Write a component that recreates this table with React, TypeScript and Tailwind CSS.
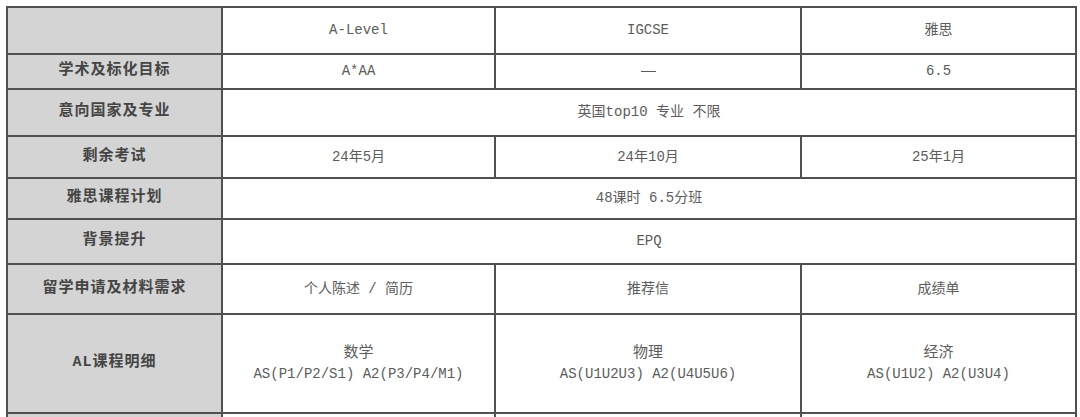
import React from "react";

const font = {
  fontFamily: '"Liberation Mono", "Noto Sans CJK SC", monospace',
};

type Row = { label: string; h: string; cells: (string | string[])[] };

const rows: Row[] = [
  { label: "学术及标化目标", h: "h-[35px]", cells: ["A*AA", "—", "6.5"] },
  { label: "意向国家及专业", h: "h-[47px]", cells: ["英国top10 专业 不限"] },
  { label: "剩余考试", h: "h-[42px]", cells: ["24年5月", "24年10月", "25年1月"] },
  { label: "雅思课程计划", h: "h-[41px]", cells: ["48课时 6.5分班"] },
  { label: "背景提升", h: "h-[45px]", cells: ["EPQ"] },
  { label: "留学申请及材料需求", h: "h-[50px]", cells: ["个人陈述 / 简历", "推荐信", "成绩单"] },
  {
    label: "AL课程明细",
    h: "h-[99px]",
    cells: [
      ["数学", "AS(P1/P2/S1) A2(P3/P4/M1)"],
      ["物理", "AS(U1U2U3) A2(U4U5U6)"],
      ["经济", "AS(U1U2) A2(U3U4)"],
    ],
  },
];

const td = "border-2 border-[#505050] text-center align-middle text-[14px] text-[#5c5c5c] p-0";
const th =
  "border-2 border-[#505050] bg-[#d4d4d4] text-center align-middle text-[15px] tracking-[1px] font-bold text-[#454545] p-0";

export default function App() {
  return (
    <div className="w-[1080px] h-[417px] overflow-hidden bg-white pl-[6px] pt-[6px]" style={font}>
      <table className="table-fixed border-collapse border-2 border-[#1e1e1e] w-[1069px]">
        <colgroup>
          <col className="w-[215px]" />
          <col className="w-[273px]" />
          <col className="w-[306px]" />
          <col className="w-[275px]" />
        </colgroup>
        <tbody>
          <tr className="h-[47px]">
            <td className={th}></td>
            <td className={td}>A-Level</td>
            <td className={td}>IGCSE</td>
            <td className={td}>雅思</td>
          </tr>
          {rows.map((r) => (
            <tr key={r.label} className={r.h}>
              <td className={th}>{r.label}</td>
              {r.cells.length === 1 ? (
                <td className={td} colSpan={3}>
                  {r.cells[0] as string}
                </td>
              ) : (
                r.cells.map((c, i) => (
                  <td key={i} className={td}>
                    {Array.isArray(c) ? (
                      <div className="flex flex-col items-center leading-[20px]">
                        <span className="text-[15px]">{c[0]}</span>
                        <span>{c[1]}</span>
                      </div>
                    ) : c === "—" ? (
                      <span className="inline-block w-[15px] h-px bg-[#5c5c5c] align-middle"></span>
                    ) : (
                      c
                    )}
                  </td>
                ))
              )}
            </tr>
          ))}
          <tr className="h-[40px]">
            <td className={th}></td>
            <td className={td}></td>
            <td className={td}></td>
            <td className={td}></td>
          </tr>
        </tbody>
      </table>
    </div>
  );
}
